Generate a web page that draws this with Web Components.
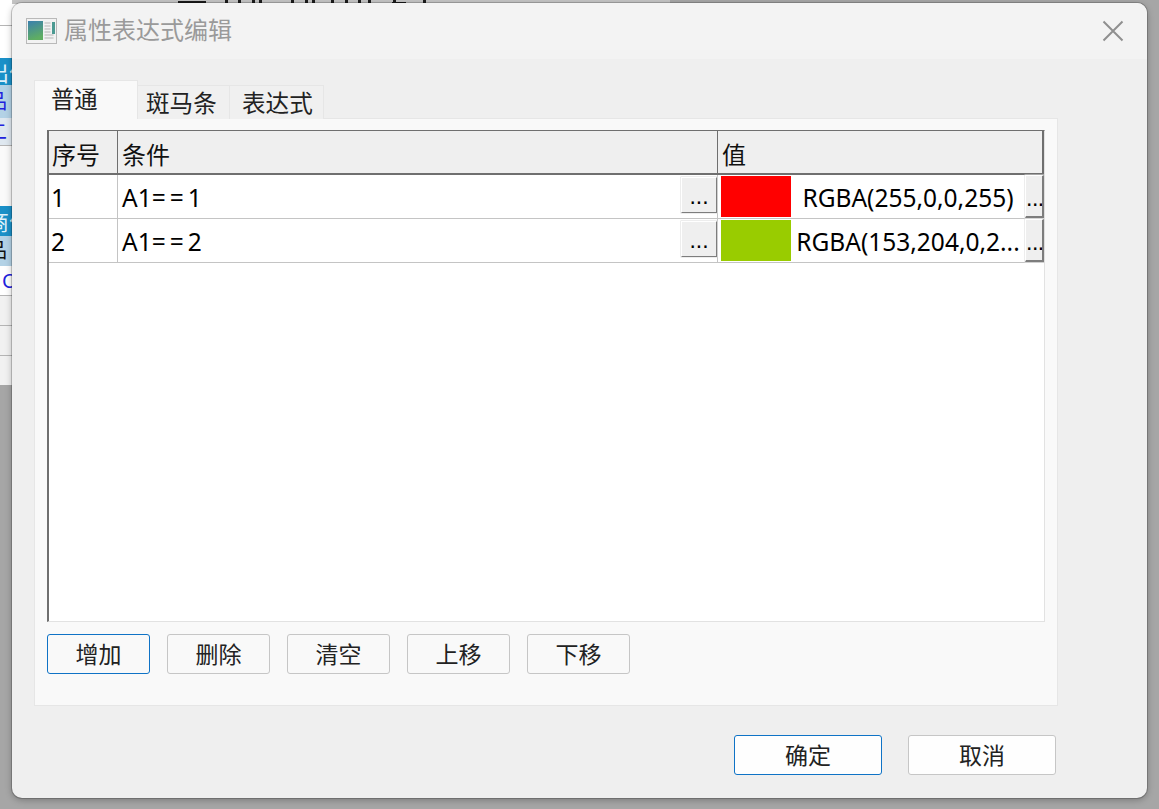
<!DOCTYPE html>
<html lang="zh">
<head>
<meta charset="utf-8">
<title>属性表达式编辑</title>
<style>
  html, body { margin: 0; height: 100%; }
  body { background: #a6a6a6; overflow: hidden; font-family: "Noto Sans", "Noto Sans CJK SC", sans-serif; }
</style>
</head>
<body>
<app-backdrop></app-backdrop>
<prop-dialog heading="属性表达式编辑">
  <tab-strip>
    <tab-item active>普通</tab-item>
    <tab-item>斑马条</tab-item>
    <tab-item>表达式</tab-item>
  </tab-strip>
  <tab-page>
    <cond-table>
      <cond-row no="1" cond="A1==1" color="#ff0000" value="RGBA(255,0,0,255)"></cond-row>
      <cond-row no="2" cond="A1==2" color="#99cc00" value="RGBA(153,204,0,2..."></cond-row>
    </cond-table>
    <div slot="actions">
      <push-btn focus>增加</push-btn>
      <push-btn>删除</push-btn>
      <push-btn>清空</push-btn>
      <push-btn>上移</push-btn>
      <push-btn>下移</push-btn>
    </div>
  </tab-page>
  <push-btn slot="footer" wide focus white>确定</push-btn>
  <push-btn slot="footer" wide white>取消</push-btn>
</prop-dialog>

<script>
const CJK = '"Noto Sans", "Noto Sans CJK SC", sans-serif';

// the window behind the dialog, only its edges show
class AppBackdrop extends HTMLElement {
  connectedCallback() {
    this.attachShadow({ mode: 'open' });
    this.shadowRoot.innerHTML = `
      <style>
        :host { position: absolute; left: 0; top: 0; width: 670px; height: 385px; background: #fff; overflow: hidden; }
        .ink { position: absolute; left: 0; top: 0; width: 100%; height: 4px; background: #c4c4c4; }
        .ink i { position: absolute; top: 0; height: 3px; width: 3px; background: #1c1c1c; }
        .strip { position: absolute; left: 0; top: 0; width: 12px; height: 385px; display: flex; flex-direction: column; overflow: hidden; background: #f1f1f1; }
        .r { box-sizing: border-box; flex: none; overflow: hidden; white-space: nowrap; display: flex; align-items: center; font: 20px/1 ${CJK}; }
        .r span { margin-left: -13px; }
        .line { border-bottom: 1px solid #b5b5b5; }
        .blue { background: #1a90c8; color: #dff1fa; font-size: 22px; }
        .mid { background: #b3d2e6; }
        .pale { background: #dfe8f0; color: #2222dd; }
        .red { border-bottom: 1px dashed #d03030; }
      </style>
      <div class="ink">
        <i style="left:178px;width:28px;top:1px;height:2px"></i>
        <i style="left:225px"></i><i style="left:238px"></i><i style="left:252px"></i><i style="left:259px"></i>
        <i style="left:291px"></i><i style="left:305px"></i><i style="left:312px"></i>
        <i style="left:331px"></i><i style="left:345px"></i><i style="left:358px"></i><i style="left:368px"></i>
        <i style="left:392px;width:14px;top:2px;height:1px"></i><i style="left:393px"></i><i style="left:423px"></i>
      </div>
      <div class="strip">
        <div class="r line" style="height:26px;background:#fff"></div>
        <div class="r" style="height:32px;background:#fff"></div>
        <div class="r blue" style="height:27px"><span>出价</span></div>
        <div class="r mid" style="height:33px;color:#2222dd"><span>品</span></div>
        <div class="r pale line" style="height:28px"><span>二</span></div>
        <div class="r" style="height:60px;background:#fafafa"></div>
        <div class="r blue" style="height:30px"><span>商价</span></div>
        <div class="r mid" style="height:30px;color:#111"><span>品</span></div>
        <div class="r line" style="height:30px;background:#fff;color:#2222dd"><span style="margin-left:2px">O</span></div>
        <div class="r line" style="height:30px"></div>
        <div class="r line" style="height:30px"></div>
        <div class="r red" style="height:30px"></div>
      </div>`;
  }
}

class PropDialog extends HTMLElement {
  connectedCallback() {
    this.attachShadow({ mode: 'open' });
    this.shadowRoot.innerHTML = `
      <style>
        :host {
          position: absolute; left: 12px; top: 3px; width: 1135px; height: 795px;
          display: flex; flex-direction: column; border-radius: 10px; background: #efefef;
          box-shadow: 0 0 0 1px rgba(0,0,0,.18), 0 2px 7px rgba(0,0,0,.28);
          font-family: ${CJK}; overflow: hidden;
        }
        header { flex: none; height: 56px; box-sizing: border-box; background: #f3f3f3; padding: 0 23px 0 14px; display: flex; align-items: center; gap: 7px; }
        h1 { margin: 0 0 2px; flex: 1; font: 400 24px/1 ${CJK}; color: #9a9a9a; }
        main { flex: 1; padding: 21px 89px 0 22px; display: flex; flex-direction: column; min-height: 0; }
        footer { flex: none; display: flex; justify-content: flex-end; gap: 26px; padding: 29px 91px 23px 0; }
      </style>
      <header>
        <svg width="31" height="26" viewBox="0 0 31 26">
          <defs><linearGradient id="g" x1="0" y1="0" x2="0.3" y2="1"><stop offset="0" stop-color="#3a7fae"/><stop offset="1" stop-color="#5fae62"/></linearGradient></defs>
          <rect x="0.5" y="0.5" width="30" height="25" fill="#f2f2f2" stroke="#b9b9b9"/>
          <rect x="2" y="3" width="15" height="19" fill="url(#g)"/>
          <rect x="26" y="4" width="3" height="12" fill="#4c9a92"/>
          <path d="M18.500 5h6M18.500 8h6M18.500 11h6M18.500 14h6M18.500 17h9M18.500 20h9" stroke="#b5b5b5"/>
        </svg>
        <h1>${this.getAttribute('heading')}</h1>
        <svg width="22" height="22" viewBox="0 0 22 22"><path d="M1.500 1.500 20.500 20.500M20.500 1.500 1.500 20.500" stroke="#8f8f8f" stroke-width="2" fill="none"/></svg>
      </header>
      <main><slot></slot></main>
      <footer><slot name="footer"></slot></footer>`;
  }
}

class TabStrip extends HTMLElement {
  connectedCallback() {
    this.attachShadow({ mode: 'open' });
    this.shadowRoot.innerHTML = `
      <style>
        :host { display: flex; align-items: flex-end; height: 39px; margin-bottom: -1px; position: relative; z-index: 1; }
      </style>
      <slot></slot>`;
  }
}

class TabItem extends HTMLElement {
  connectedCallback() {
    this.attachShadow({ mode: 'open' });
    this.shadowRoot.innerHTML = `
      <style>
        :host {
          box-sizing: border-box; display: flex; align-items: center; height: 34px; padding: 2px 0 0 8px;
          background: #f0f0f0; border: 1px solid #e6e6e6; border-bottom: 0; margin-left: -1px;
          font: 23.600px/1 ${CJK}; color: #222;
        }
        :host(:nth-child(2)) { width: 93px; }
        :host(:nth-child(3)) { width: 95px; padding-left: 12px; }
        :host([active]) { width: 104px; height: 39px; background: #f9f9f9; padding: 0 0 1px 16px; margin-left: 0; font-size: 23.300px; }
      </style>
      <slot></slot>`;
  }
}

class TabPage extends HTMLElement {
  connectedCallback() {
    this.attachShadow({ mode: 'open' });
    this.shadowRoot.innerHTML = `
      <style>
        :host {
          box-sizing: border-box; display: flex; flex-direction: column; width: 1024px; height: 588px;
          background: #f9f9f9; border: 1px solid #e6e6e6; padding: 11px 12px 31px 12px;
        }
        .actions { flex: none; margin-top: 12px; }
        ::slotted([slot=actions]) { display: flex; gap: 17px; }
      </style>
      <slot></slot>
      <div class="actions"><slot name="actions"></slot></div>`;
  }
}

class CondTable extends HTMLElement {
  connectedCallback() {
    this.attachShadow({ mode: 'open' });
    this.shadowRoot.innerHTML = `
      <style>
        :host {
          box-sizing: border-box; display: block; width: 998px; height: 492px; flex: none; background: #fff;
          border-left: 2px solid #6f6f6f; border-top: 1px solid #6f6f6f;
          border-right: 1px solid #e2e2e2; border-bottom: 1px solid #e2e2e2;
          font: 24.500px/1 ${CJK}; color: #000;
        }
        .head { display: grid; grid-template-columns: 69px 600px 1fr; height: 44px; background: #efefef; border-bottom: 2px solid #6f6f6f; box-sizing: border-box; }
        .head div { box-sizing: border-box; padding: 5px 0 0 3px; display: flex; align-items: center; font-size: 24px; border-right: 1px solid #6f6f6f; color: #111; }
        .head div:nth-child(2) { padding-left: 4px; }
        .head div:last-child { border-right-width: 2px; padding-left: 4px; }
      </style>
      <div class="head"><div>序号</div><div>条件</div><div>值</div></div>
      <slot></slot>`;
  }
}

class CondRow extends HTMLElement {
  connectedCallback() {
    const a = n => this.getAttribute(n);
    // the == of the condition is set wider than the rest in the original
    const cond = a('cond').replace('==', '<span>==</span>');
    this.attachShadow({ mode: 'open' });
    this.shadowRoot.innerHTML = `
      <style>
        :host { box-sizing: border-box; display: grid; grid-template-columns: 69px 600px 1fr; height: 44px; border-bottom: 1px solid #c4c4c4; }
        .c { box-sizing: border-box; border-right: 1px solid #c4c4c4; display: flex; align-items: center; min-width: 0; }
        .no { padding: 3px 0 0 2px; }
        .cond { padding-left: 4px; justify-content: space-between; }
        .cond b { font-weight: 400; padding-top: 3px; }
        .cond b span { letter-spacing: 4px; }
        .val { border-right: 0; padding-left: 3px; align-items: stretch; }
        .sw { flex: none; width: 70px; margin: 1px 0; background: ${a('color')}; }
        .txt { flex: 1; min-width: 0; text-align: center; white-space: nowrap; align-self: center; padding-top: 3px; }
        .cond mini-btn { align-self: flex-start; margin-top: 2px; }
      </style>
      <div class="c no">${a('no')}</div>
      <div class="c cond"><b>${cond}</b><mini-btn></mini-btn></div>
      <div class="c val"><div class="sw"></div><div class="txt">${a('value')}</div><mini-btn narrow></mini-btn></div>`;
  }
}

class MiniBtn extends HTMLElement {
  connectedCallback() {
    this.attachShadow({ mode: 'open' });
    this.shadowRoot.innerHTML = `
      <style>
        :host {
          box-sizing: border-box; flex: none; display: flex; justify-content: center; align-items: center;
          width: 36px; height: 36px; background: #efefef;
          border: 1px solid; border-color: #fff #7d7d7d #7d7d7d #fff;
          font: 400 23px/1 "Liberation Sans", sans-serif; color: #000; padding-top: 3px;
          box-shadow: 0 0 0 .5px #dcdcdc;
        }
        :host([narrow]) { width: 19px; height: auto; letter-spacing: -.5px; justify-content: flex-start; padding: 5px 0 0 0; border-right-width: 2px; border-bottom-width: 2px; overflow: hidden; }
      </style>...`;
  }
}

class PushBtn extends HTMLElement {
  connectedCallback() {
    this.attachShadow({ mode: 'open' });
    this.shadowRoot.innerHTML = `
      <style>
        :host {
          box-sizing: border-box; display: flex; justify-content: center; align-items: center;
          width: 103px; height: 40px; border: 1px solid #c6c6c6; border-radius: 3px; background: #f9f9f9;
          font: 23px/1 ${CJK}; color: #222;
        }
        :host([focus]) { border-color: #0f73c6; }
        :host([wide]) { width: 148px; }
        :host([white]) { background: #fefefe; }
      </style>
      <slot></slot>`;
  }
}

customElements.define('app-backdrop', AppBackdrop);
customElements.define('prop-dialog', PropDialog);
customElements.define('tab-strip', TabStrip);
customElements.define('tab-item', TabItem);
customElements.define('tab-page', TabPage);
customElements.define('cond-table', CondTable);
customElements.define('cond-row', CondRow);
customElements.define('mini-btn', MiniBtn);
customElements.define('push-btn', PushBtn);
</script>
</body>
</html>
